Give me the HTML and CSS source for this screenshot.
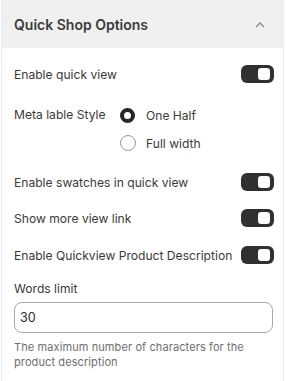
FILE: index.html
```html
<!DOCTYPE html>
<html>
<head>
<meta charset="utf-8">
<link rel="stylesheet" href="styles.css">
</head>
<body>
<div class="panel">
  <div class="header">
    <span class="title">Quick Shop Options</span>
    <svg class="chev" width="10" height="6" viewBox="0 0 10 6"><path d="M1 5 L5 1 L9 5" fill="none" stroke="#8a8a8a" stroke-width="1.3"/></svg>
  </div>
  <div class="body">
    <div class="row r1">
      <span>Enable quick view</span>
      <span class="toggle"><span class="knob"></span></span>
    </div>
    <div class="meta">
      <span class="meta-label">Meta lable Style</span>
      <div class="radios">
        <div class="radio"><span class="dot on"></span><span>One Half</span></div>
        <div class="radio"><span class="dot"></span><span>Full width</span></div>
      </div>
    </div>
    <div class="row r2">
      <span>Enable swatches in quick view</span>
      <span class="toggle"><span class="knob"></span></span>
    </div>
    <div class="row r3">
      <span>Show more view link</span>
      <span class="toggle"><span class="knob"></span></span>
    </div>
    <div class="row r4">
      <span>Enable Quickview Product Description</span>
      <span class="toggle"><span class="knob"></span></span>
    </div>
    <div class="field">
      <div class="flabel">Words limit</div>
      <div class="input">30</div>
      <div class="help">The maximum number of characters for the product description</div>
    </div>
  </div>
</div>
</body>
</html>
```
FILE: styles.css
```css
* { box-sizing: border-box; }
html, body { margin: 0; padding: 0; background: #fff; }
body { font-family: Inter, "Liberation Sans", sans-serif; color: #3a3a3a; font-size: 12.1px; }
.panel {
  width: 283px;
  height: 381px;
  border-left: 1px solid #ececec;
  border-right: 1px solid #ececec;
  margin-left: 1px;
}
.header {
  height: 48px;
  background: #f0f0f0;
  display: flex;
  align-items: center;
  justify-content: space-between;
  padding: 0 18px 0 12px;
}
.title { font-size: 14px; font-weight: 600; color: #3b3b3b; }
.chev { margin-top: 1px; }
.body { padding: 0 9px 0 12px; }
.row {
  display: flex;
  align-items: center;
  justify-content: space-between;
  height: 18px;
}
.r1 { margin-top: 17px; }
.r2 { margin-top: 21px; }
.r3 { margin-top: 18px; }
.r4 { margin-top: 19px; }
.toggle {
  width: 33px;
  height: 18px;
  background: #303030;
  border-radius: 6px;
  display: flex;
  align-items: center;
  justify-content: flex-end;
  padding-right: 4px;
  flex: none;
}
.knob { width: 12px; height: 12px; background: #fff; border-radius: 3px; }
.meta { display: flex; margin-top: 23px; }
.meta-label { width: 106px; line-height: 18px; }
.radios { display: flex; flex-direction: column; gap: 10px; }
.radio { display: flex; align-items: center; gap: 10px; height: 18px; }
.dot {
  width: 16px; height: 16px; border-radius: 50%;
  border: 1px solid #9a9a9a; background: #fff;
}
.dot.on { border: 4px solid #262626; width: 15px; height: 15px; margin: 0 1px 0 0; }
.field { margin-top: 16px; }
.flabel { line-height: 18px; }
.input {
  margin-top: 4px;
  height: 31px;
  border: 1px solid #a8a8a8;
  border-radius: 8px;
  padding: 0 5px;
  display: flex;
  align-items: center;
  font-size: 12.5px;
  color: #2a2a2a;
  margin-right: 1px;
}
.help { margin-top: 7px; font-size: 11px; line-height: 15px; color: #6e6e6e; padding-right: 20px; letter-spacing: 0.1px; }
```
